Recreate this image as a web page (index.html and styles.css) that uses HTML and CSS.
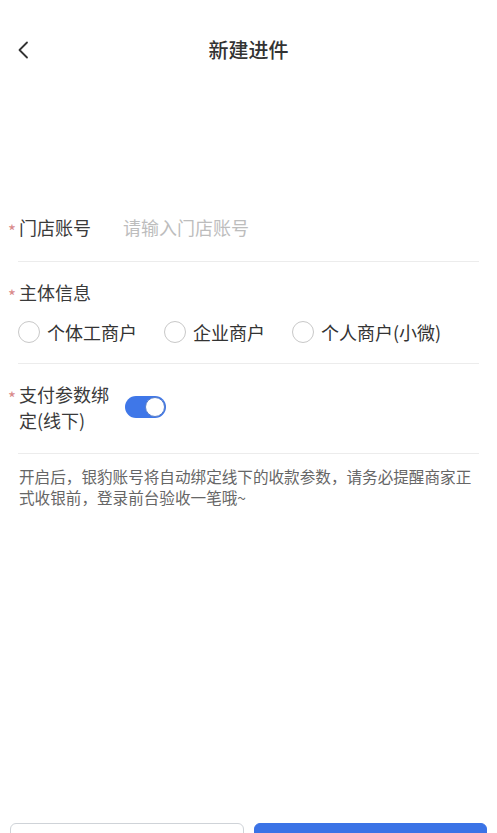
FILE: index.html
```html
<!DOCTYPE html>
<html lang="zh-CN">
<head>
<meta charset="utf-8">
<title>新建进件</title>
<link rel="stylesheet" href="styles.css">
</head>
<body>
<div class="page">
  <header class="navbar">
    <span class="back">
      <svg width="14" height="18" viewBox="0 0 14 18"><path d="M10 1.5 L2.5 9 L10 16.5" fill="none" stroke="#333" stroke-width="1.8" stroke-linecap="round" stroke-linejoin="round"/></svg>
    </span>
    <h1 class="title">新建进件</h1>
  </header>

  <form class="form">
    <div class="row row-input">
      <label class="label"><span class="req">*</span>门店账号</label>
      <span class="placeholder">请输入门店账号</span>
    </div>

    <div class="row row-block">
      <div class="label"><span class="req">*</span>主体信息</div>
      <div class="radios">
        <span class="radio"><span class="circle"></span>个体工商户</span>
        <span class="radio"><span class="circle"></span>企业商户</span>
        <span class="radio"><span class="circle"></span>个人商户(小微)</span>
      </div>
    </div>

    <div class="row row-switch">
      <div class="label label-wrap"><span class="req">*</span>支付参数绑定(线下)</div>
      <span class="switch"><span class="knob"></span></span>
    </div>

    <p class="note">开启后，银豹账号将自动绑定线下的收款参数，请务必提醒商家正式收银前，登录前台验收一笔哦~</p>
  </form>
</div>
<footer class="footer">
  <button class="btn btn-ghost" type="button"></button>
  <button class="btn btn-primary" type="button"></button>
</footer>
</body>
</html>
```

FILE: styles.css
```css
* { box-sizing: border-box; }
html, body {
  margin: 0;
  padding: 0;
  background: #fff;
  font-family: "Noto Sans CJK SC", "Noto Sans", sans-serif;
  color: #333;
}
.page {
  height: 823px;
  overflow: hidden;
}
.navbar {
  position: relative;
  height: 100px;
  padding-top: 30px;
}
.back {
  position: absolute;
  left: 17px;
  top: 41px;
  width: 14px;
  height: 18px;
  display: block;
}
.back svg { display: block; }
.title {
  margin: 0;
  height: 40px;
  line-height: 40px;
  text-align: center;
  font-size: 20px;
  font-weight: 500;
  color: #333;
}
.form {
  margin-top: 94px;
  padding: 0 18px;
}
.row {
  border-bottom: 1px solid #ececec;
}
.label {
  font-size: 18px;
  line-height: 26px;
  height: auto;
  color: #3a3a3a;
  padding-left: 1px;
}
.req {
  display: inline-block;
  width: 11px;
  margin-left: -11px;
  height: 26px;
  line-height: 26px;
  vertical-align: top;
  color: #d98a8a;
  font-size: 17px;
  padding-left: 0;
  transform: translateY(4px);
}
.row-input {
  display: flex;
  align-items: center;
  padding: 20px 0 21px;
}
.row-input .label {
  width: 105px;
  flex: none;
}
.placeholder {
  font-size: 18px;
  line-height: 26px;
  color: #bdbdbd;
}
.row-block {
  padding: 17px 0 18px;
}
.radios {
  display: flex;
  align-items: center;
  height: 26px;
  margin-top: 14px;
}
.radio {
  display: flex;
  align-items: center;
  gap: 7px;
  margin-right: 27px;
  font-size: 18px;
  line-height: 26px;
  color: #333;
}
.circle {
  width: 22px;
  height: 22px;
  border: 1px solid #c8c8c8;
  border-radius: 50%;
}
.row-switch {
  display: flex;
  align-items: center;
  padding: 17px 0 20px;
}
.label-wrap {
  width: 91px;
  margin-right: 15px;
}
.switch {
  display: flex;
  align-items: center;
  justify-content: flex-end;
  width: 41px;
  height: 22px;
  border-radius: 11px;
  background: #3f77e8;
  padding: 1px;
  margin-left: 1px;
}
.knob {
  width: 20px;
  height: 20px;
  border-radius: 50%;
  background: #fff;
  border: 1px solid #5a7fc8;
}
.note {
  margin: 0;
  padding: 12px 0 0 1px;
  font-size: 15.6px;
  line-height: 21px;
  color: #666;
}
.footer {
  display: flex;
  gap: 10px;
  padding: 0 10px;
}
.btn {
  flex: 1;
  height: 44px;
  border-radius: 6px;
  font: inherit;
}
.btn-ghost {
  background: #fff;
  border: 1px solid #cfd3d8;
}
.btn-primary {
  background: #3b73e6;
  border: 1px solid #3b73e6;
}
```
